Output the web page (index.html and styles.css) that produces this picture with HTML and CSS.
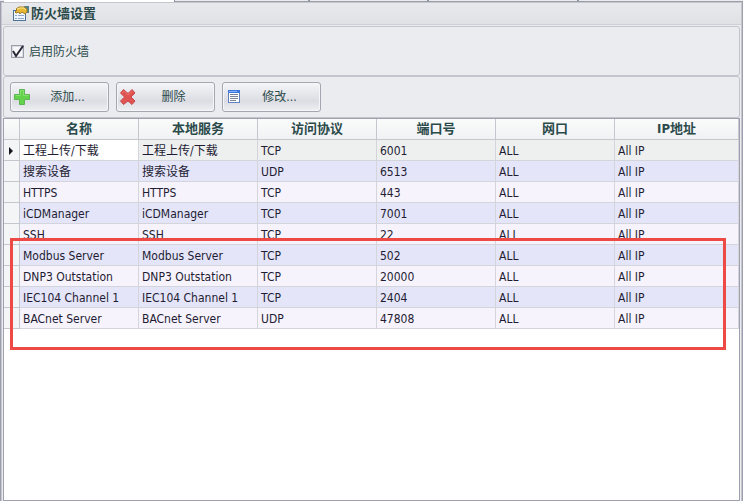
FILE: index.html
```html
<!DOCTYPE html>
<html lang="zh-CN">
<head>
<meta charset="utf-8">
<title>防火墙设置</title>
<link rel="stylesheet" href="styles.css">
</head>
<body>
<div class="tabs" aria-hidden="true"><span class="tab active"></span><span class="tab second"></span><span class="tab third"></span><span class="tab fourth"></span><span class="tab rest"></span></div>
<main class="window">
  <header class="caption">
    <svg class="caption-icon" width="16" height="16" viewBox="0 0 16 16" aria-hidden="true">
      <rect x="0" y="4" width="13" height="11" fill="#4f7196"/>
      <rect x="1" y="5" width="11" height="9" fill="#f0f6ff"/>
      <path d="M2 9.500h2M5 9.500h6M2 12.500h2M5 12.500h6" stroke="#8ba6c6"/>
      <path d="M11 0h5v7h-3z" fill="#54808a"/>
      <path d="M3 3l3-2h5l3 2v3l-2 2-3-2-2 2-1-2-3 1-1-1 2-2z" fill="#e9b935" stroke="#a07c24"/>
      <path d="M4 3l3-1h4l2 2" fill="none" stroke="#ffe98a"/>
    </svg>
    <h1>防火墙设置</h1>
  </header>
  <section class="group options">
    <label class="check">
      <span class="check-box">
        <input type="checkbox" checked>
        <svg width="14" height="14" viewBox="0 0 14 14" aria-hidden="true"><path d="M2 6l3 5L12 1" fill="none" stroke="#292837" stroke-width="2"/></svg>
      </span>
      <span>启用防火墙</span>
    </label>
  </section>
  <section class="group toolbar">
    <button type="button">
      <svg width="16" height="16" viewBox="0 0 16 16" aria-hidden="true"><path d="M5.500 0.500h5v5h5v5h-5v5h-5v-5h-5v-5h5z" fill="#62d34b" stroke="#5fb455"/><path d="M6.500 5.500v-4h3v5h5M1.500 6.500h5" fill="none" stroke="#86e26c"/></svg>
      <span>添加...</span>
    </button>
    <button type="button">
      <svg width="16" height="16" viewBox="0 0 16 16" aria-hidden="true"><path d="M3.500 0.500L8 4.500l4-4 3 3.500-4 4 4 4-3 3.500-4-3.500-4.500 3.500-3-3.500 4-4-4-4z" fill="#df5351" stroke="#c9484b" stroke-linejoin="round"/><path d="M2 4l2-2 4 4 4-4" fill="none" stroke="#e96f6c"/></svg>
      <span>删除</span>
    </button>
    <button type="button">
      <svg width="16" height="16" viewBox="0 0 16 16" aria-hidden="true"><rect x="2.500" y="1.500" width="11" height="12" fill="#fff" stroke="#5f81c0"/><path d="M2 1h12v3H2z" fill="#3f78dc"/><path d="M3 2.500h8" stroke="#82adff"/><path d="M4 5.500h8M4 7.500h8M4 9.500h8M4 11.500h6" stroke="#7c8498"/></svg>
      <span>修改...</span>
    </button>
  </section>
  <div class="grid">
    <table>
      <colgroup><col class="c-mark"><col class="c-data"><col class="c-data"><col class="c-data"><col class="c-data"><col class="c-data"><col></colgroup>
      <thead><tr><th></th><th>名称</th><th>本地服务</th><th>访问协议</th><th>端口号</th><th>网口</th><th>IP地址</th></tr></thead>
      <tbody>
        <tr class="current"><td><svg width="4" height="8" viewBox="0 0 4 8" aria-hidden="true"><path d="M0 0l4 4-4 4z" fill="#15151f"/></svg></td><td class="focused">工程上传/下载</td><td>工程上传/下载</td><td>TCP</td><td>6001</td><td>ALL</td><td>All IP</td></tr>
        <tr><td></td><td>搜索设备</td><td>搜索设备</td><td>UDP</td><td>6513</td><td>ALL</td><td>All IP</td></tr>
        <tr><td></td><td>HTTPS</td><td>HTTPS</td><td>TCP</td><td>443</td><td>ALL</td><td>All IP</td></tr>
        <tr><td></td><td>iCDManager</td><td>iCDManager</td><td>TCP</td><td>7001</td><td>ALL</td><td>All IP</td></tr>
        <tr><td></td><td>SSH</td><td>SSH</td><td>TCP</td><td>22</td><td>ALL</td><td>All IP</td></tr>
        <tr><td></td><td>Modbus Server</td><td>Modbus Server</td><td>TCP</td><td>502</td><td>ALL</td><td>All IP</td></tr>
        <tr><td></td><td>DNP3 Outstation</td><td>DNP3 Outstation</td><td>TCP</td><td>20000</td><td>ALL</td><td>All IP</td></tr>
        <tr><td></td><td>IEC104 Channel 1</td><td>IEC104 Channel 1</td><td>TCP</td><td>2404</td><td>ALL</td><td>All IP</td></tr>
        <tr><td></td><td>BACnet Server</td><td>BACnet Server</td><td>UDP</td><td>47808</td><td>ALL</td><td>All IP</td></tr>
      </tbody>
    </table>
    <div class="highlight"></div>
  </div>
</main>
</body>
</html>
```
FILE: styles.css
```css
* { box-sizing: border-box; }

body {
  margin: 0;
  min-height: 100vh;
  display: flex;
  flex-direction: column;
  background: #ebecf0;
  color: #2b4a4a;
  font: 12px/16px "DejaVu Sans Condensed", "Noto Sans CJK SC", sans-serif;
}

.tabs { display: flex; height: 2px; border-bottom: 1px solid #9b9fac; }
.tab { width: 135px; background: #e9ebec; border-right: 2px solid #8f93a0; }
.tab.active { width: 171px; margin: 0 0 -1px 4px; background: #fff; border-right-width: 1px; }
.tab.third { width: 119px; }
.tab.fourth { width: 150px; }
.tab.rest { flex: 1; border-right: 0; }

.window {
  flex: 1;
  display: flex;
  flex-direction: column;
  padding: 0 1px;
  border: solid #9d9fae;
  border-width: 0 1px;
  box-shadow: inset 1px 0 #c5c6ce, inset -1px 0 #c5c6ce, inset 0 1px #c5c6ce;
}

.caption {
  display: flex;
  align-items: center;
  gap: 2px;
  height: 22px;
  margin-top: 1px;
  padding: 1px 11px 0;
  border-bottom: 1px solid #cfd0d6;
  background: linear-gradient(#e8e9ec, #e0e1e5);
}
.caption h1 { margin: 0; font-size: 13px; line-height: 16px; }

.group {
  margin: 0 1px;
  border: 1px solid #c3c4cc;
  border-radius: 3px;
  background: #ebecf0;
}
.options { height: 50px; margin-top: 1px; padding: 17px 7px; }
.toolbar { display: flex; gap: 7px; height: 42px; padding: 5px 6px; }

.check { display: inline-flex; align-items: center; gap: 4px; }
.check-box { display: grid; }
.check-box input,
.check-box svg { grid-area: 1 / 1; }
.check-box input {
  appearance: none;
  width: 13px;
  height: 13px;
  margin: 0;
  border: 1px solid #9c9eaa;
  background: #f8f8fa;
  box-shadow: inset 0 0 0 1px #dcdde2;
}
.check-box svg { pointer-events: none; visibility: hidden; }
.check-box input:checked + svg { visibility: visible; }

.toolbar button {
  display: flex;
  align-items: center;
  width: 99px;
  height: 30px;
  padding: 0 3px;
  border: 1px solid #a5a7b0;
  border-radius: 3px;
  background: linear-gradient(#f4f5f7, #e2e3e8 50%, #dcdde3 65%, #eff0f3);
  box-shadow: inset 0 0 0 1px #f5f6f8;
  color: inherit;
  font: inherit;
}
.toolbar button span { flex: 1; }

.grid {
  position: relative;
  flex: 1;
  margin: 0 1px;
  border: 1px solid #a0a1b0;
  background: #fff;
}

table { width: 100%; table-layout: fixed; border-collapse: separate; border-spacing: 0; }
.c-mark { width: 16px; }
.c-data { width: 119px; }
th, td {
  height: 21px;
  padding: 0 3px;
  border: solid #d4d5db;
  border-width: 0 1px 1px 0;
  white-space: nowrap;
}
th {
  border-color: #c5c6ce;
  background: linear-gradient(#fafbfb, #f0f1f3);
  font-size: 13px;
  line-height: 16px;
}
td { padding-top: 2px; background: #f6f3fd; color: #1f1c33; }
tbody tr:nth-child(even) td { background: #e4e5f9; }
tbody tr:nth-child(n) td:first-child {
  padding: 2px 5px 0;
  border-color: #c5c6ce;
  background: #f4f5f7;
}
td svg { display: block; }
.current td { background: #eef0f0; }
.current .focused { background: #fff; }

.highlight {
  position: absolute;
  top: 119px;
  right: 13px;
  left: 6px;
  height: 112px;
  border: 3px solid #ee4a45;
  pointer-events: none;
}
```
